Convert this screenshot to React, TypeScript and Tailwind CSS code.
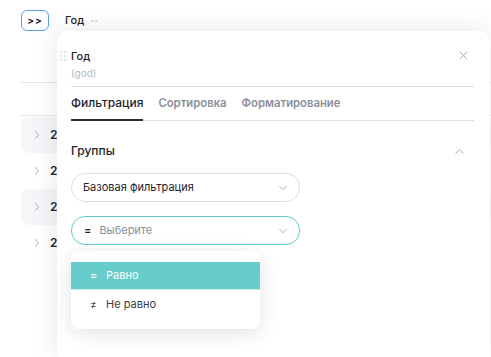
import { ChevronDown, ChevronRight, ChevronUp, X } from "lucide-react";

const rows = ["2021", "2022", "2023", "2024"];

const DragHandle = () => (
  <svg width="6" height="10" viewBox="0 0 6 10" className="text-gray-300">
    {[1, 5, 9].map((y) =>
      [1, 5].map((x) => <circle key={`${x}-${y}`} cx={x} cy={y} r="0.9" fill="currentColor" />)
    )}
  </svg>
);

const App = () => {
  return (
    <div className="relative h-[357px] w-[491px] overflow-hidden bg-white font-['Inter',sans-serif] text-[#1f2329]">
      {/* page behind the popover */}
      <div className="flex items-center gap-[16px] pl-[21px] pt-[10px]">
        <button className="flex h-[21px] w-[28px] items-center justify-center rounded-[6px] border border-[#5b9cf0] text-[10px] font-bold tracking-[1px]">
          &gt;&gt;
        </button>
        <span className="text-[11px] font-medium">Год</span>
        <span className="-ml-[10px] text-[12px] font-bold text-gray-300">··</span>
      </div>

      <div className="ml-[21px] mt-[51px] border-t border-[#e3e5ea]" />
      <div className="ml-[21px] mt-[32px] border-t border-[#e3e5ea]" />

      <div className="ml-[21px] mt-[1px] flex flex-col">
        {rows.map((r, i) => (
          <div
            key={r}
            className={`flex h-[36px] items-center gap-[6px] rounded-[8px] pl-[9px] ${i % 2 === 0 ? "bg-[#f5f6fa]" : ""}`}
          >
            <ChevronRight size={14} strokeWidth={1.5} className="text-[#a3a7b3]" />
            <span className="text-[12px] font-semibold">{r}</span>
          </div>
        ))}
      </div>

      {/* popover */}
      <div className="absolute bottom-0 left-[57px] top-[31px] w-[433px] rounded-t-[10px] bg-white shadow-[0_0_28px_rgba(0,0,0,0.10)]">
        <div className="pl-[14px] pr-[16px] pt-[17px]">
          <div className="relative flex items-start justify-between">
            <div className="absolute -left-[11px] top-[3px]">
              <DragHandle />
            </div>
            <div>
              <div className="text-[11px] font-medium leading-[16px]">Год</div>
              <div className="mt-[2px] text-[10px] leading-[14px] text-[#b4b8c2]">(god)</div>
            </div>
            <X size={13} strokeWidth={1.5} className="mr-[4px] mt-[1px] text-[#8e929c]" />
          </div>

          <div className="mt-[6px] border-t border-[#dcdfe5]" />

          <div className="flex gap-[15px] border-b border-[#dcdfe5] pt-[8px]">
            <div className="-mb-[1px] border-b-2 border-[#2a2d33] pb-[8px] text-[12px] font-medium leading-[16px]">
              Фильтрация
            </div>
            <div className="text-[11.3px] font-semibold leading-[16px] text-[#8a8f9c]">Сортировка</div>
            <div className="text-[11.3px] font-semibold leading-[16px] text-[#8a8f9c]">Форматирование</div>
          </div>

          <div className="mt-[21px] flex items-center justify-between">
            <span className="text-[12px] font-medium">Группы</span>
            <ChevronUp size={15} strokeWidth={1.5} className="mr-[7px] text-[#a3a7b3]" />
          </div>

          <div className="mt-[13px] flex h-[29px] w-[229px] items-center justify-between rounded-[14px] border border-[#dcdfe7] pl-[11px] pr-[9px]">
            <span className="text-[11px]">Базовая фильтрация</span>
            <ChevronDown size={14} strokeWidth={1.5} className="text-[#a3a7b3]" />
          </div>

          <div className="mt-[14px] flex h-[29px] w-[229px] items-center justify-between rounded-[14px] border border-[#5fcdc8] pl-[12px] pr-[9px]">
            <span className="flex items-center gap-[8px] text-[11px]">
              <span className="font-semibold">=</span>
              <span className="text-[#8a8f9c]">Выберите</span>
            </span>
            <ChevronDown size={14} strokeWidth={1.5} className="text-[#a3a7b3]" />
          </div>
        </div>
      </div>

      {/* dropdown */}
      <div className="absolute left-[71px] top-[251px] w-[189px] rounded-[8px] bg-white py-[11px] shadow-[0_4px_20px_rgba(0,0,0,0.12)]">
        <div className="flex h-[28px] items-center gap-[9px] border-b border-[#c8ecea] bg-[#66cdca] pl-[19px] text-[11px] text-white">
          <span className="w-[7px] font-semibold">=</span>
          <span>Равно</span>
        </div>
        <div className="flex h-[28px] items-center gap-[9px] pl-[19px] text-[11px] text-[#3a3d44]">
          <span className="w-[7px] text-[10px]">≠</span>
          <span>Не равно</span>
        </div>
      </div>
    </div>
  );
};

export default App;
